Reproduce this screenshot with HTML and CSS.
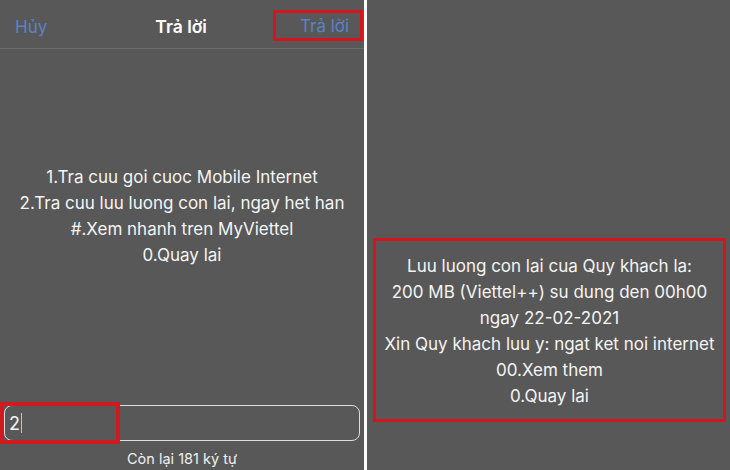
FILE: index.html
```html
<!DOCTYPE html>
<html lang="vi">
<head>
<meta charset="utf-8">
<title>Trả lời</title>
<link rel="stylesheet" href="styles.css">
</head>
<body>
<div class="screen">
  <section class="panel left">
    <header class="bar">
      <span class="btn cancel">Hủy</span>
      <span class="title">Trả lời</span>
      <span class="btn reply">Trả lời</span>
    </header>
    <div class="menu">
      <p>1.Tra cuu goi cuoc Mobile Internet</p>
      <p>2.Tra cuu luu luong con lai, ngay het han</p>
      <p>#.Xem nhanh tren MyViettel</p>
      <p>0.Quay lai</p>
    </div>
    <div class="compose">
      <div class="field">
        <span class="typed">2</span><span class="caret"></span>
        <span class="mark"></span>
      </div>
      <div class="count">Còn lại 181 ký tự</div>
    </div>
  </section>
  <div class="divider"></div>
  <section class="panel right">
    <div class="result">
      <p>Luu luong con lai cua Quy khach la:</p>
      <p>200 MB (Viettel++) su dung den 00h00</p>
      <p>ngay 22-02-2021</p>
      <p>Xin Quy khach luu y: ngat ket noi internet</p>
      <p>00.Xem them</p>
      <p>0.Quay lai</p>
    </div>
  </section>
</div>
</body>
</html>
```
FILE: styles.css
```css
* { box-sizing: border-box; }
html, body { margin: 0; padding: 0; }
body {
  background: #585858;
  font-family: Inter, "Liberation Sans", Arial, sans-serif;
  color: #f4f4f4;
  width: 730px;
  height: 470px;
  overflow: hidden;
}
p { margin: 0; }
.screen {
  display: flex;
  height: 470px;
}
.panel {
  background: #585858;
  display: flex;
  flex-direction: column;
}
.left { width: 364px; }
.divider { width: 3px; background: #fafafa; }
.right { flex: 1; padding: 238px 4px 0 6px; }

.bar {
  height: 49px;
  border-bottom: 1px solid #6c6c6c;
  display: flex;
  align-items: center;
  justify-content: space-between;
  padding: 0 1px 0 15px;
}
.btn {
  color: #5a82c8;
  font-size: 17px;
}
.cancel { margin-top: 5px; }
.title {
  font-weight: 600;
  font-size: 17.5px;
  color: #ffffff;
  margin-left: 42px;
  margin-top: 5px;
}
.reply {
  border: 3px solid #d4161c;
  width: 90px;
  height: 31px;
  padding-left: 24px;
  line-height: 27px;
  margin-top: 2px;
  white-space: nowrap;
}

.menu {
  margin-top: 115px;
  text-align: center;
  font-size: 17px;
  line-height: 26px;
}

.compose {
  margin-top: auto;
  padding: 0 4px 2px 4px;
}
.field {
  position: relative;
  height: 36px;
  border: 1.5px solid #dedede;
  border-radius: 8px;
  display: flex;
  align-items: center;
  padding-left: 4px;
  font-size: 18px;
}
.caret {
  width: 1px;
  height: 20px;
  background: #b8c4dc;
  margin-left: 1px;
}
.mark {
  position: absolute;
  left: -5px;
  top: -4px;
  width: 120px;
  height: 42px;
  border: 4px solid #d01a1f;
}
.count {
  text-align: center;
  font-size: 14.5px;
  line-height: 18px;
  margin-top: 9px;
  color: #f0f0f0;
}

.result {
  border: 3px solid #d3161d;
  height: 184px;
  padding-top: 12px;
  text-align: center;
  font-size: 17px;
  line-height: 26px;
}
```
